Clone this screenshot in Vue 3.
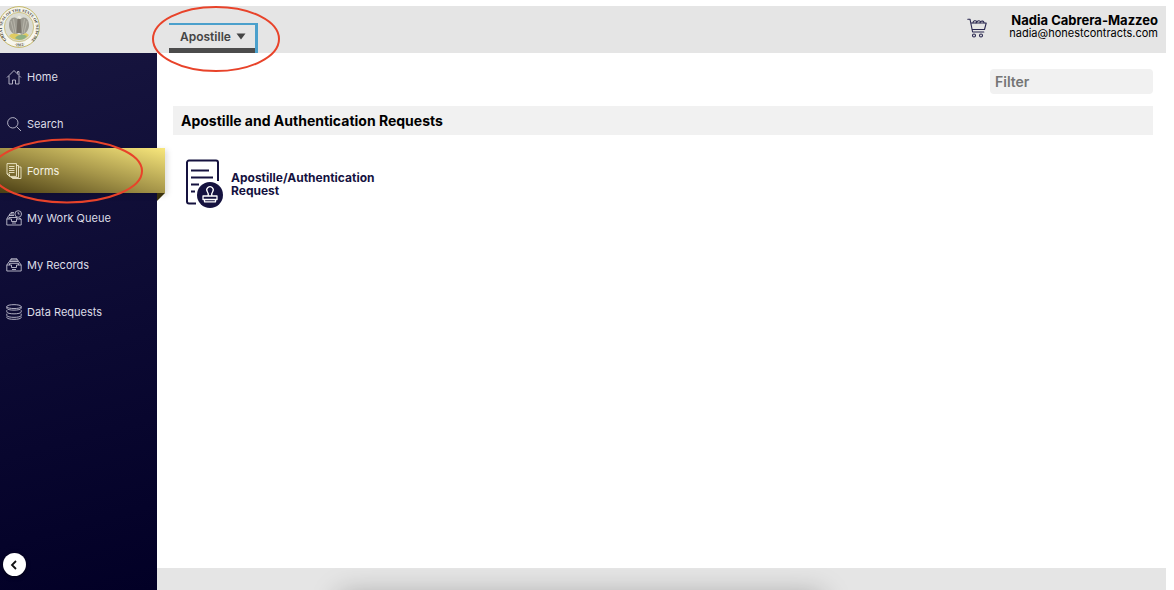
<template>
  <div class="page">
    <header class="header">
      <a class="logo" href="#" aria-label="State of New Mexico">
        <svg viewBox="0 0 42 42" width="42" height="42">
          <defs>
            <path id="ring" d="M8.500 34A17 17 0 1 1 33.500 34" />
            <path id="ring-low" d="M8 35A19 19 0 0 0 34 35" />
          </defs>
          <circle cx="21" cy="21" r="20.4" fill="#f7f6ee" stroke="#c3b768" />
          <circle cx="21" cy="21" r="14.7" fill="#dadbd3" stroke="#c9bd72" stroke-width="0.8" />
          <text class="seal-text"><textPath href="#ring">GREAT SEAL OF THE STATE OF NEW MEXICO</textPath></text>
          <text class="seal-text"><textPath href="#ring-low" startOffset="34%">·1912·</textPath></text>
          <path d="M20 13c-5-4-9 0-9 6 0 5 3 9 8 10l2-6 2 6c5-1 8-5 8-10 0-6-4-10-9-6l-1-2z" fill="#9c9a90" />
          <path d="M13 15l3 12M15.500 13l2.500 15M29 15l-3 12M26.500 13l-2.500 15" stroke="#c4c2b6" stroke-width="0.7" />
          <path d="M19.500 13h3l1 14h-5z" fill="#7b766c" />
          <path d="M19.500 12c0-3 3-3 4 0l-2 1z" fill="#efece0" />
          <path d="M11 30c2-3 5-3 8-2l5 1 4-2 3 2c-4 6-15 7-20 1z" fill="#e0cc62" />
          <path d="M17 32c3-4 8-4 12-2-2 4-8 5-12 2z" fill="#8eb183" />
        </svg>
      </a>
      <button class="tab" type="button" aria-haspopup="menu">
        Apostille
        <svg viewBox="0 0 10 7" width="10" height="7"><path d="M.5.5h9L5 6.500z" fill="#444" /></svg>
      </button>
      <div class="account">
        <button class="cart" type="button" aria-label="Cart">
          <svg viewBox="0 0 20 20" width="20" height="20" fill="none" stroke="#29264f" stroke-width="1.100" stroke-linecap="round" stroke-linejoin="round">
            <path d="M.8 1.200h2.200l2.600 12.800h11.200M3.800 5h15.400l-1.700 6.500H5" />
            <path d="M6 4.800c0-2 2.500-3 4-1 1-1.500 3-1.500 3.500 0 1.500-1.500 3.300-.6 3.500 1M9 4.800l1-1M13 4.800l.5-1" />
            <circle cx="7" cy="17.500" r="1.500" /><circle cx="14" cy="17.500" r="1.500" />
          </svg>
        </button>
        <div class="user">
          <strong>Nadia Cabrera-Mazzeo</strong>
          <span>nadia@honestcontracts.com</span>
        </div>
      </div>
    </header>

    <div class="body">
      <aside class="sidebar">
        <nav class="nav">
          <a v-for="i in items" :key="i.label" href="#" :class="['link', i.label == current ? 'active' : '']">
            <svg viewBox="0 0 16 16" width="16" height="16" class="icon">
              <path v-for="d in i.paths" :key="d" :d="d" />
            </svg>
            {{ i.label }}
          </a>
        </nav>
        <button class="collapse" type="button" aria-label="Collapse menu">
          <svg viewBox="0 0 8 10" width="8" height="10"><path d="M6 1L2 5l4 4" fill="none" stroke="#111" stroke-width="1.800" /></svg>
        </button>
      </aside>

      <div class="content">
        <main class="main">
          <input class="filter" type="text" placeholder="Filter" aria-label="Filter" />
          <h1 class="title">Apostille and Authentication Requests</h1>
          <a class="form" href="#">
            <svg viewBox="0 0 38 50" width="38" height="50" fill="none" stroke="#15123f" stroke-width="2">
              <path d="M11 44.500H4a2 2 0 0 1-2-2V3.500a2 2 0 0 1 2-2h27a2 2 0 0 1 2 2V22" />
              <path d="M6 11.500h18M6 18.500h22M6 25.500h8M6 32.500h4" />
              <circle cx="25" cy="36" r="13" fill="#15123f" stroke="none" />
              <g stroke="#fff" stroke-width="1.300" stroke-linejoin="round">
                <path d="M23 37c.8-2 .3-3-.6-4.200a3.200 3.200 0 1 1 5.200 0c-.9 1.200-1.400 2.200-.6 4.200" />
                <path d="M18 37h14v3.500H18zM19.500 40.500v2.300h11v-2.300" />
              </g>
            </svg>
            <span>Apostille/Authentication Request</span>
          </a>
        </main>
        <footer class="footer"></footer>
      </div>
    </div>

    <svg class="mark mark-tab" viewBox="0 0 130 68" width="130" height="68"><ellipse cx="65" cy="34" rx="63" ry="32" /></svg>
    <svg class="mark mark-forms" viewBox="0 0 152 66" width="152" height="66"><ellipse cx="76" cy="33" rx="75" ry="31.500" /></svg>
  </div>
</template>

<script setup>
import { ref } from 'vue'

const current = ref('Forms')

const items = [
  { label: 'Home', paths: ['M1 8.500L8 1.500l7 7M3 7v8h3.500v-4h3v4H13V7M11.500 4.500V2.500H13V6'] },
  { label: 'Search', paths: ['M12 6.800a5.200 5.200 0 1 1-10.400 0a5.200 5.200 0 1 1 10.400 0', 'M10.600 10.600L15 15'] },
  {
    label: 'Forms',
    paths: ['M1 .6h9.500v12.800H3.500L1 11zM1 11h2.500v2.400', 'M3 3.500h5.500M3 5.500h5.500M3 7.500h5.500M3 9.500h5.500', 'M10.500 2.500h2v12H5v-1M12.500 4H15v11.500H6.500v-1'],
  },
  {
    label: 'My Work Queue',
    paths: ['M.8 9h4.700v2.500h5V9h4.700v6H.8z', 'M.8 9l2-3.500H8M13 8l2 1M3.500 5.500V4H8M5 4V2.500h3M3 9V7.500h8V9M6 13h4', 'M15.500 4a3.300 3.300 0 1 1-6.600 0a3.300 3.300 0 1 1 6.600 0M12.200 2v2h1.500'],
  },
  {
    label: 'My Records',
    paths: ['M.8 8h4.700v2.500h5V8h4.700v6H.8z', 'M.8 8l2.500-3.500h9.400L15.200 8M4 4.500V3h8v1.500M5 3V1.800h6V3M3.500 8V6.300h9V8M6 12.500h4'],
  },
  {
    label: 'Data Requests',
    paths: [
      'M.8 2.600c0-2.600 14.400-2.600 14.400 0s-14.400 2.600-14.400 0v1.600c0 2.600 14.400 2.600 14.400 0V2.600',
      'M.8 6.200v1.700c0 2.600 14.400 2.600 14.400 0V6.200',
      'M.8 9.700v1.700c0 2.600 14.400 2.600 14.400 0V9.700',
      'M.8 12.600v.8c0 2.600 14.400 2.600 14.400 0v-.8',
    ],
  },
]
</script>

<style>
body {
  margin: 0;
}
</style>

<style scoped>
.page {
  position: relative;
  box-sizing: border-box;
  min-height: 100vh;
  padding: 6px 8px 0 0;
  display: flex;
  flex-direction: column;
  overflow: hidden;
  background: #fff;
  color: #000;
  font-family: Inter, 'Open Sans', sans-serif;
}
button {
  font-family: inherit;
  border: 0;
  padding: 0;
  background: none;
  cursor: pointer;
}
a {
  color: inherit;
  text-decoration: none;
}
svg {
  display: block;
  flex: none;
}
.header {
  height: 47px;
  display: flex;
  background: #e5e5e5;
}
.logo {
  width: 169px;
}
.logo svg {
  margin-left: -2px;
}
.seal-text {
  fill: #3c3c36;
  font-family: 'Liberation Serif', serif;
  font-size: 4px;
  font-weight: 700;
}
.tab {
  box-sizing: border-box;
  width: 89px;
  margin-top: 17px;
  padding: 0 0 6px 11px;
  display: flex;
  align-items: center;
  gap: 5px;
  border-top: 2px solid #4ba0cc;
  border-right: 3px solid #4ba0cc;
  box-shadow: inset 0 -5px #4c4c4c;
  color: #444;
  font-size: 12px;
  font-weight: 600;
}
.account {
  margin-left: auto;
  padding-right: 8px;
  display: flex;
  gap: 22px;
}
.cart {
  align-self: flex-start;
  margin-top: 12px;
}
.user {
  padding-top: 7px;
  display: flex;
  flex-direction: column;
  text-align: right;
  font-size: 11px;
  line-height: 12px;
}
.user strong {
  font-size: 13px;
  line-height: 14px;
}
.body {
  flex: 1;
  display: flex;
}
.sidebar {
  width: 157px;
  display: flex;
  flex-direction: column;
  background: linear-gradient(165deg, #17153f, #0b0932 55%, #020026);
}
.nav {
  padding-top: 1px;
  display: flex;
  flex-direction: column;
  gap: 2px;
}
.link {
  height: 45px;
  padding-left: 6px;
  display: flex;
  align-items: center;
  gap: 5px;
  color: #dcdce6;
  font-size: 11px;
}
.icon {
  fill: none;
  stroke: #c2c1d0;
  stroke-width: 0.9;
}
.active {
  position: relative;
  margin-right: -8px;
  background: linear-gradient(to top right, #4a3e13, #a59549 50%, #f8e77c);
  box-shadow: 2px 2px 6px rgba(0, 0, 0, 0.15);
  color: #f5f2e2;
}
.active .icon {
  stroke: #eee8c8;
}
.active::after {
  content: '';
  position: absolute;
  top: 100%;
  right: 0;
  border-top: 8px solid #3b320d;
  border-right: 8px solid transparent;
}
.collapse {
  width: 23px;
  height: 23px;
  margin: auto auto 14px 3px;
  padding-right: 2px;
  display: flex;
  align-items: center;
  justify-content: center;
  border-radius: 50%;
  background: #fff;
  box-shadow: 0 1px 4px rgba(0, 0, 0, 0.6);
}
.content {
  flex: 1;
  min-width: 0;
  display: flex;
  flex-direction: column;
}
.main {
  flex: 1;
  padding: 16px 13px 0 16px;
  display: flex;
  flex-direction: column;
  align-items: flex-start;
}
.filter {
  box-sizing: border-box;
  width: 163px;
  height: 25px;
  align-self: flex-end;
  padding: 0 5px 1px;
  border: 0;
  border-radius: 4px;
  background: #f1f1f1;
  font-family: inherit;
  font-size: 14px;
  font-weight: 600;
}
.filter::placeholder {
  color: #757575;
}
.title {
  box-sizing: border-box;
  width: 100%;
  margin: 12px 0 24px;
  padding-left: 8px;
  background: #f1f1f1;
  font-size: 14px;
  font-weight: 700;
  line-height: 29px;
}
.form {
  width: 224px;
  margin-left: 12px;
  display: flex;
  align-items: center;
  gap: 8px;
  color: #15123f;
  font-size: 12px;
  font-weight: 700;
  line-height: 13px;
}
.footer {
  position: relative;
  height: 22px;
  overflow: hidden;
  background: #e5e5e5;
}
.footer::after {
  content: '';
  position: absolute;
  top: 100%;
  left: 18%;
  right: 34%;
  height: 40px;
  box-shadow: 0 4px 28px rgba(0, 0, 0, 0.28);
}
.mark {
  position: absolute;
  fill: none;
  stroke: #e8432a;
  stroke-width: 2;
  pointer-events: none;
}
.mark-tab {
  top: 5px;
  left: 151px;
}
.mark-forms {
  top: 138px;
  left: -9px;
}
</style>
